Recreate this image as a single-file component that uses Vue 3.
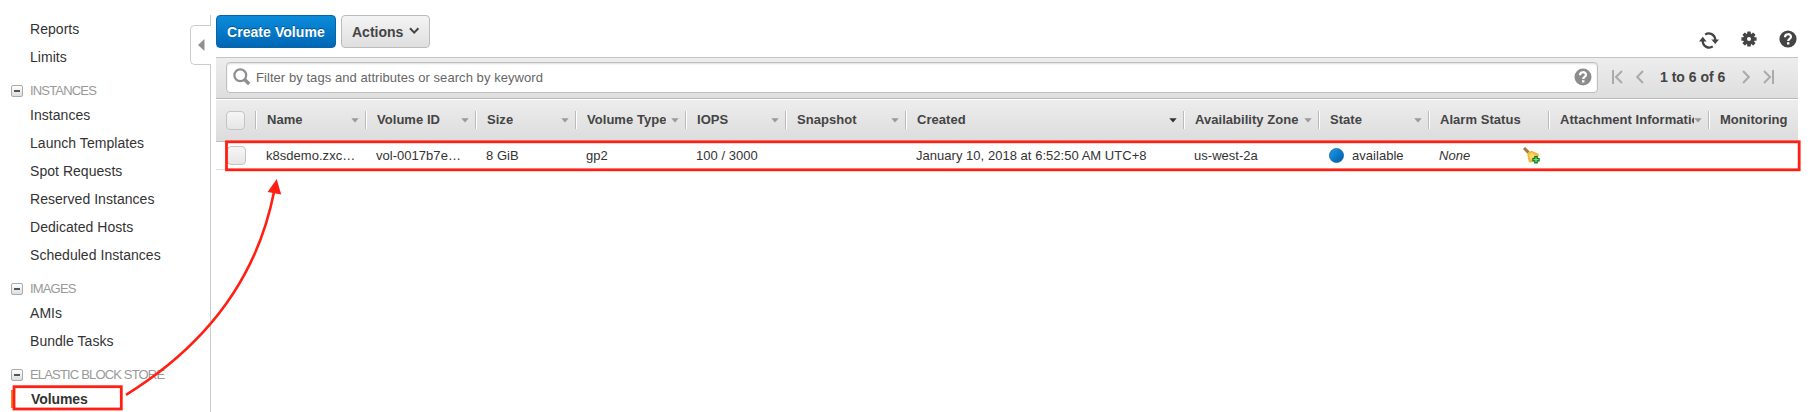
<script setup>
const top = ['Reports', 'Limits']
const groups = [
  { title: 'INSTANCES', items: ['Instances', 'Launch Templates', 'Spot Requests', 'Reserved Instances', 'Dedicated Hosts', 'Scheduled Instances'] },
  { title: 'IMAGES', items: ['AMIs', 'Bundle Tasks'] },
  { title: 'ELASTIC BLOCK STORE', items: ['Volumes'] },
]
const cols = [
  { t: 'Name', w: 110, v: 'k8sdemo.zxc…', c: 1 },
  { t: 'Volume ID', w: 110, v: 'vol-0017b7e…', c: 1 },
  { t: 'Size', w: 100, v: '8 GiB', c: 1 },
  { t: 'Volume Type', w: 110, v: 'gp2', c: 1 },
  { t: 'IOPS', w: 100, v: '100 / 3000', c: 1 },
  { t: 'Snapshot', w: 120, v: '', c: 1 },
  { t: 'Created', w: 278, v: 'January 10, 2018 at 6:52:50 AM UTC+8', c: 2 },
  { t: 'Availability Zone', w: 135, v: 'us-west-2a', c: 1 },
  { t: 'State', w: 110, v: 'available', c: 1, kind: 'state' },
  { t: 'Alarm Status', w: 120, v: 'None', c: 0, kind: 'alarm' },
  { t: 'Attachment Information', w: 160, v: '', c: 1 },
  { t: 'Monitoring', w: 90, v: '', c: 0 },
]
</script>

<template>
  <div class="page">
    <aside class="side">
      <nav>
        <a v-for="i in top" :key="i" class="item">{{ i }}</a>
        <template v-for="g in groups" :key="g.title">
          <div class="group"><span class="minus"></span><span class="gt">{{ g.title }}</span></div>
          <a v-for="i in g.items" :key="i" class="item" :class="{ active: i === 'Volumes' }"><span>{{ i }}</span></a>
        </template>
      </nav>
    </aside>
    <div class="gutter">
      <div class="line l1"></div>
      <div class="tab"><svg width="7" height="12" viewBox="0 0 7 12"><path d="M6.5 0V12L0 6Z" fill="#8f8f8f" /></svg></div>
      <div class="line l2"></div>
    </div>
    <main class="main">
      <div class="toolbar">
        <button class="btn primary"><span>Create Volume</span></button>
        <button class="btn plain"><span>Actions</span>
          <svg width="11" height="8" viewBox="0 0 11 8"><path d="M1 1.2L5.2 5.6L9.4 1.2" fill="none" stroke="#444" stroke-width="2" /></svg>
        </button>
        <div class="tools">
          <svg class="refresh" width="20" height="17" viewBox="0 0 20 17">
            <g fill="none" stroke="#444" stroke-width="2.3"><path d="M6.2 2.6C10 0 16.3 2 16.3 8.6" /><path d="M13.8 14.4C10 17 3.7 15 3.7 8.4" /></g>
            <path d="M12.4 7.4H20L16.2 12ZM0 9.4H7.6L3.8 4.8Z" fill="#444" />
          </svg>
          <svg class="gear" width="16" height="16" viewBox="-8 -8 16 16">
            <g fill="#444"><circle r="5.8" /><rect v-for="a in 4" :key="a" x="-1.8" y="-7.6" width="3.6" height="15.2" rx=".5" :transform="`rotate(${a * 45})`" /></g>
            <circle r="2" fill="#fff" />
          </svg>
          <svg class="help" width="18" height="18" viewBox="0 0 18 18"><circle cx="9" cy="9" r="8.6" fill="#444" /><path d="M6 7.2C6 3.2 12 3.4 12 6.8C12 9 9.2 8.8 9.2 11" fill="none" stroke="#fff" stroke-width="2.2" /><rect x="8" y="12.2" width="2.4" height="2.3" fill="#fff" /></svg>
        </div>
      </div>
      <div class="filter">
        <div class="search">
          <svg width="18" height="18" viewBox="0 0 18 18"><circle cx="7.3" cy="7.3" r="5.9" fill="none" stroke="#8f8f8f" stroke-width="2.2" /><path d="M11.6 11.6L16.2 16" stroke="#8f8f8f" stroke-width="3.4" /></svg>
          <span class="ph">Filter by tags and attributes or search by keyword</span>
          <svg class="qh" width="18" height="18" viewBox="0 0 18 18"><circle cx="9" cy="9" r="8.5" fill="#8c8c8c" /><path d="M6 7.2C6 3.2 12 3.4 12 6.8C12 9 9.2 8.8 9.2 11" fill="none" stroke="#fff" stroke-width="2.2" /><rect x="8" y="12.2" width="2.4" height="2.3" fill="#fff" /></svg>
        </div>
        <svg class="pg first" width="11" height="14" viewBox="0 0 11 14"><path d="M1 0V14M10 1L4 7L10 13" /></svg>
        <svg class="pg prev" width="8" height="14" viewBox="0 0 8 14"><path d="M7 1L1.2 7L7 13" /></svg>
        <span class="count">1 to 6 of 6</span>
        <svg class="pg next" width="8" height="14" viewBox="0 0 8 14"><path d="M1 1L6.8 7L1 13" /></svg>
        <svg class="pg last" width="11" height="14" viewBox="0 0 11 14"><path d="M10 0V14M1 1L7 7L1 13" /></svg>
      </div>
      <div class="thead">
        <span class="cbcell"><span class="cb"></span></span>
        <div v-for="c in cols" :key="c.t" class="th" :style="{ width: c.w + 'px' }">
          <span class="tt">{{ c.t }}</span><svg v-if="c.c" class="caret" :class="{ dark: c.c === 2 }" width="8" height="5" viewBox="0 0 8 5"><path d="M.3 .3H7.7L4 4.6Z" /></svg>
        </div>
      </div>
      <div class="row">
        <span class="cbcell r"><span class="cb"></span></span>
        <div v-for="c in cols" :key="c.t" class="td" :class="c.kind" :style="{ width: c.w + 'px' }">
          <svg v-if="c.kind === 'state'" class="dot" width="15" height="15" viewBox="0 0 14 14"><defs><linearGradient id="bl" x1="0" y1="0" x2="1" y2="1"><stop offset="0" stop-color="#1a9ee8" /><stop offset="1" stop-color="#0058a8" /></linearGradient></defs><circle cx="7" cy="7" r="6.6" fill="url(#bl)" stroke="#0a5a9c" stroke-width=".6" /></svg>
          <span>{{ c.v }}</span>
          <svg v-if="c.kind === 'alarm'" class="bell" width="17" height="17" viewBox="0 0 17 17">
            <path d="M1 1L5.6 5.6" stroke="#a8773a" stroke-width="3" />
            <path d="M4.2 8.2Q5 4.4 8.8 3.8C11 5.4 14.5 5.6 16.2 7.6C15.5 11 11 15 7 15.8C4.5 14 5.6 10.5 4.2 8.2Z" fill="#eebc3c" />
            <path d="M5.8 8.2L8.6 5.4C10 7 12 8 13 8.5L8 13C7 11.5 7 10 5.8 8.2Z" fill="#fbd566" />
            <path d="M13 9V16.4M9.3 12.7H16.7" stroke="#087a1c" stroke-width="3.6" /><path d="M13 10.2V15.2M10.5 12.7H15.5" stroke="#7be07f" stroke-width="1.3" />
          </svg>
        </div>
      </div>
    </main>
    <svg class="marks" width="1812" height="412" viewBox="0 0 1812 412">
      <g fill="none" stroke="#ff1f14" stroke-width="2.8">
        <rect x="226.5" y="141.8" width="1572.7" height="28" />
        <rect x="14" y="386.7" width="107.3" height="22.3" />
        <path d="M126 394.8Q249 318.7 274 192" stroke-width="2.6" />
      </g>
      <path d="M276.7 179L267.6 192L281.2 194.6Z" fill="#ff1f14" />
    </svg>
  </div>
</template>

<style>
body { margin: 0; background: #fff; overflow: hidden; }
</style>
<style scoped>
.page { position: relative; display: flex; width: 1812px; height: 412px; overflow: hidden; background: #fff; font-family: "Liberation Sans", Arial, sans-serif; color: #444; }
.side { width: 190px; flex: none; padding-top: 15px; box-sizing: border-box; }
.item { display: block; height: 28px; line-height: 28px; padding-left: 30px; font-size: 14px; letter-spacing: .04px; color: #333; white-space: nowrap; }
.group { display: flex; align-items: center; height: 30px; padding-left: 11px; white-space: nowrap; box-sizing: border-box; padding-top: 6px; }
.minus { box-sizing: border-box; width: 12px; height: 12px; border: 1px solid #aaa; border-radius: 2px; background: linear-gradient(#fff, #ddd); display: flex; align-items: center; justify-content: center; margin-top: 4px; }
.minus::after { content: ""; width: 6px; height: 2px; background: #555; }
.gt { margin-left: 7px; margin-top: 2px; font-size: 13px; letter-spacing: -.83px; color: #999; }
.item.active { height: 18px; line-height: 18px; margin: 5px 0 0 11px; border-left: 3px solid #f58220; padding-left: 17px; font-weight: bold; letter-spacing: -.1px; }
.gutter { width: 26px; flex: none; display: flex; flex-direction: column; padding-top: 15px; height: 412px; box-sizing: border-box; }
.line { width: 1px; margin-left: 20px; background: #ccc; }
.l1 { height: 11px; }
.l2 { flex: 1; }
.tab { width: 21px; height: 40px; box-sizing: border-box; border: 1px solid #ccc; border-right: 0; border-radius: 5px 0 0 5px; display: flex; align-items: center; padding-left: 7px; margin-top: -1px; }
.main { width: 1582px; flex: none; }
.toolbar { height: 57px; padding-top: 15px; box-sizing: border-box; display: flex; align-items: flex-start; }
.btn { height: 33px; box-sizing: border-box; border-radius: 4px; font: bold 14px "Liberation Sans", Arial, sans-serif; display: flex; align-items: center; padding: 0 0 0 10px; white-space: nowrap; }
.primary { width: 120px; border: 1px solid #0a64a4; background: linear-gradient(#0a8cdb, #0067b5); color: #fff; text-shadow: 0 -1px 0 #00508c; letter-spacing: .06px; }
.plain { width: 89px; margin-left: 5px; border: 1px solid #bbb; background: linear-gradient(#f4f4f4, #dfdfdf); color: #444; }
.plain svg { margin-left: 6px; margin-top: -2px; }
.tools { margin-left: auto; display: flex; align-items: flex-start; }
.refresh { margin-top: 17px; margin-right: 22px; }
.gear { margin-top: 16px; margin-right: 22px; }
.help { margin-top: 15px; margin-right: 1px; }
.filter { height: 42px; box-sizing: border-box; border-top: 1px solid #c4c4c4; border-bottom: 1px solid #b8b8b8; background: linear-gradient(#ededed, #dedede); display: flex; align-items: center; padding: 0 0 2px 10px; }
.search { width: 1372px; height: 31px; box-sizing: border-box; border: 1px solid #bfbfbf; border-radius: 4px; background: #fff; box-shadow: inset 0 1px 2px #ddd; display: flex; align-items: center; padding: 0 5px 0 6px; }
.ph { margin-left: 5px; font-size: 13px; letter-spacing: .06px; color: #666; white-space: nowrap; }
.qh { margin-left: auto; }
.pg { fill: none; stroke: #aaa; stroke-width: 2; flex: none; }
.first { margin-left: 14px; }
.prev { margin-left: 13px; }
.count { margin-left: 16px; width: 82px; font-size: 14px; font-weight: bold; white-space: nowrap; }
.last { margin-left: 13px; }
.thead { height: 43px; box-sizing: border-box; border-top: 1px solid #fff; border-bottom: 1px solid #bbb; background: linear-gradient(#ededed, #dcdcdc); display: flex; align-items: center; overflow: hidden; padding-bottom: 1px; }
.cbcell { width: 39px; flex: none; padding-left: 10px; box-sizing: border-box; }
.cbcell.r { padding-left: 11px; }
.cb { display: block; width: 19px; height: 19px; box-sizing: border-box; border: 1px solid #c4c4c4; border-radius: 4px; background: linear-gradient(#f6f6f6, #e6e6e6); }
.th { box-sizing: border-box; flex: none; height: 18px; border-left: 1px solid #bbb; box-shadow: inset 1px 0 #fff; padding: 0 6px 0 11px; display: flex; align-items: center; font-size: 13px; font-weight: bold; letter-spacing: .04px; white-space: nowrap; }
.tt { overflow: hidden; flex: 0 1 auto; margin-top: -1px; }
.caret { margin-left: auto; flex: none; fill: #999; }
.caret.dark { fill: #333; }
.row { height: 28px; box-sizing: border-box; border-bottom: 1px solid #ddd; display: flex; align-items: center; }
.td { box-sizing: border-box; flex: none; padding-left: 11px; font-size: 13px; letter-spacing: .03px; color: #333; white-space: nowrap; display: flex; align-items: center; }
.dot { margin-left: 0; }
.state span { margin-left: 8px; }
.alarm span { font-style: italic; }
.bell { margin-left: auto; margin-right: 8px; }
.marks { position: absolute; left: 0; top: 0; pointer-events: none; }
</style>
